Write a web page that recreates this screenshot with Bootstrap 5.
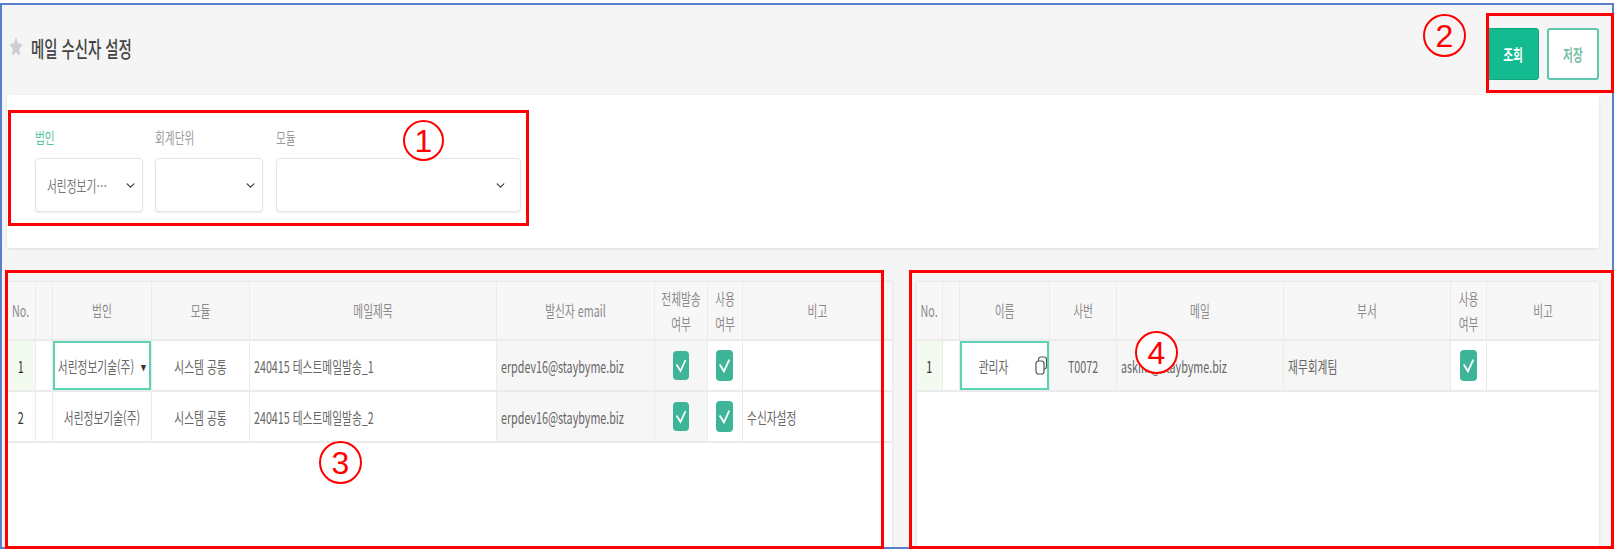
<!DOCTYPE html>
<html lang="ko">
<head>
  <meta charset="UTF-8" />
  <meta name="viewport" content="width=device-width, initial-scale=1.0"/>
  <title>메일 수신자 설정</title>
  <link href="https://cdn.jsdelivr.net/npm/bootstrap@5.3.0/dist/css/bootstrap.min.css" rel="stylesheet" />
  <style>
    html, body {
      height: 549px;
      overflow: hidden;
    }
    body {
      position: relative;
      padding-top: 3px;
      background-color: #fff;
      font-family: "Noto Sans CJK KR", "Noto Sans", sans-serif;
      font-size: 16px;
      color: #666;
    }
    .app-frame {
      height: 546px;
      padding-right: 13px;
      padding-left: 5px;
      border: 2px solid #5b7fcb;
      background-color: #f5f5f5;
    }
    /* the reference is squeezed sideways: text keeps its height, loses a third of its width */
    .squeeze {
      display: block;
      width: 149.25%;
      transform: scaleX(.67);
      transform-origin: 0 50%;
      white-space: nowrap;
    }
    .page-head {
      height: 90px;
    }
    .page-star {
      width: 14px;
      height: 21px;
      margin: 0 8px 7px 2px;
      flex: none;
    }
    .page-title {
      width: 120px;
      margin-bottom: 3px;
      font-size: 21.500px;
      font-weight: 500;
      color: #444;
    }
    .head-btns {
      margin-top: 8px;
    }
    .btn-query, .btn-save {
      width: 52px;
      height: 52px;
      padding: 0;
      border-radius: 3px;
      font-weight: 700;
    }
    .btn-query, .btn-query:hover {
      background-color: #14bb90;
      border: 1px solid #0ea77f;
      color: #fff;
    }
    .btn-save, .btn-save:hover {
      background-color: #fff;
      border: 2px solid #5cc7ac;
      color: #7bbfa9;
    }
    .filter-box {
      height: 153px;
      padding: 26px 28px 0;
      gap: 12px;
      background-color: #fff;
      border-radius: 3px;
      box-shadow: 0 1px 3px rgba(0,0,0,.1);
    }
    .filter-item {
      width: 108px;
    }
    .filter-wide {
      width: 245px;
      margin-left: 1px;
    }
    .filter-label {
      height: 37px;
      color: #9c9c9c;
      line-height: 33px;
    }
    .filter-on {
      color: #58c3a5;
    }
    .filter-select {
      height: 54px;
      padding: 0 0 0 11px;
      display: flex;
      align-items: center;
      border: 1px solid #e6e6e6;
      border-radius: 4px;
      box-shadow: 0 1px 2px rgba(0,0,0,.08);
      background-position: right 6px center;
      background-size: 11px 9px;
      color: #777;
      font-size: 16px;
    }
    .filter-wide .filter-select {
      background-position: right 14px center;
    }
    .grid-row {
      margin-top: 34px;
      height: 265px;
    }
    .grid-panel {
      background-color: #fff;
      box-shadow: 0 0 3px rgba(0,0,0,.12);
    }
    .panel-left {
      width: 885px;
    }
    .panel-right {
      width: 682px;
    }
    .mail-grid {
      table-layout: fixed;
      margin: 0;
      font-size: 16px;
    }
    .mail-grid>:not(caption)>*>* {
      padding: 0;
      border: 1px solid #ebebeb;
      border-width: 0 1px 2px 0;
      vertical-align: middle;
      color: #666;
    }
    .mail-grid>thead>tr>th {
      height: 58px;
      background-color: #f8f7f8;
      color: #8a8a8a;
      font-weight: 400;
      line-height: 25px;
      text-align: center;
    }
    .mail-grid>tbody>tr>td {
      height: 51px;
    }
    .mail-grid>tbody>tr>td.cell-ro {
      background-color: #f7f6f7;
    }
    .mail-grid>tbody>tr>td.cell-row-on {
      background-color: #f3fbf0;
    }
    .mail-grid>tbody>tr>td.cell-on {
      box-shadow: inset 0 0 0 2px #5ed2b5;
    }
    .mail-grid>tbody>tr>td.cell-no {
      color: #333;
    }
    .cell-left {
      padding-left: 6px;
    }
    .cell-arrow {
      font-size: 8px;
      color: #333;
      margin-left: 10px;
      vertical-align: 2px;
    }
    .name-text {
      margin-right: 8px;
    }
    .copy-icon {
      width: 12px;
      height: 19px;
      margin-right: 2px;
      flex: none;
    }
    .grid-check.form-check-input {
      display: block;
      float: none;
      width: 16px;
      height: 29px;
      margin: 0 auto;
      border: 0;
      border-radius: 4px;
      background-color: #3eb498;
    }
    .grid-check.form-check-input:checked[type=checkbox] {
      background-image: url("data:image/svg+xml,%3csvg xmlns='http://www.w3.org/2000/svg' viewBox='0 0 16 29'%3e%3cpath fill='none' stroke='%23fff' stroke-width='1.700' d='M3.500 13.500l4 6.500 5-11'/%3e%3c/svg%3e");
      background-size: 100% 100%;
    }
    .grid-check.check-big.form-check-input {
      width: 17px;
      height: 31px;
    }
    .w-no-a { width: 28px; }
    .w-no-b { width: 25px; }
    .w-state { width: 17px; }
    .w-99 { width: 99px; }
    .w-98 { width: 98px; }
    .w-247 { width: 247px; }
    .w-158 { width: 158px; }
    .w-53 { width: 53px; }
    .w-35 { width: 35px; }
    .w-150 { width: 150px; }
    .w-90 { width: 90px; }
    .w-67 { width: 67px; }
    .w-167 { width: 167px; }
    .w-36 { width: 36px; }
    .w-113 { width: 113px; }
    /* red callouts drawn on top of the screen */
    .note-box {
      position: absolute;
      border: 3px solid #f00;
      pointer-events: none;
    }
    .note-1 { left: 8px; top: 110px; width: 521px; height: 116px; }
    .note-2 { left: 1486px; top: 13px; width: 128px; height: 80px; }
    .note-3 { left: 5px; top: 270px; width: 879px; height: 279px; }
    .note-4 { left: 909px; top: 270px; width: 705px; height: 279px; }
    .note-num {
      position: absolute;
      width: 43px;
      height: 43px;
      display: flex;
      align-items: center;
      justify-content: center;
      border: 2px solid #f00;
      border-radius: 50%;
      background-color: #fff;
      color: #f00;
      font-family: "Liberation Sans", sans-serif;
      font-size: 32px;
      line-height: 1;
    }
    .num-1 { left: 403px; top: 120px; width: 41px; height: 41px; }
    .num-2 { left: 1423px; top: 14px; background-color: #f5f5f5; }
    .num-3 { left: 319px; top: 441px; }
    .num-4 { left: 1135px; top: 331px; }
  </style>
</head>
<body>
  <div class="app-frame d-flex flex-column">
    <div class="page-head d-flex align-items-center">
      <svg class="page-star" viewBox="0 0 24 24" preserveAspectRatio="none">
        <path fill="#cfcfcf" d="M12 1l3.400 7.400 8.100.9-6 5.500 1.700 8L12 18.800 4.800 22.800l1.700-8-6-5.500 8.100-.9z"/>
      </svg>
      <div class="page-title"><span class="squeeze">메일 수신자 설정</span></div>
      <div class="head-btns ms-auto d-flex gap-2">
        <button type="button" class="btn btn-query"><span class="squeeze text-center">조회</span></button>
        <button type="button" class="btn btn-save"><span class="squeeze text-center">저장</span></button>
      </div>
    </div>

    <div class="filter-box d-flex">
      <div class="filter-item">
        <div class="filter-label filter-on"><span class="squeeze">법인</span></div>
        <div class="form-select filter-select"><span class="squeeze">서린정보기…</span></div>
      </div>
      <div class="filter-item">
        <div class="filter-label"><span class="squeeze">회계단위</span></div>
        <div class="form-select filter-select"></div>
      </div>
      <div class="filter-wide">
        <div class="filter-label"><span class="squeeze">모듈</span></div>
        <div class="form-select filter-select"></div>
      </div>
    </div>

    <div class="grid-row d-flex justify-content-between">
      <div class="grid-panel panel-left">
        <table class="table mail-grid">
          <colgroup>
            <col class="w-no-a"><col class="w-state"><col class="w-99"><col class="w-98"><col class="w-247"><col class="w-158"><col class="w-53"><col class="w-35"><col class="w-150">
          </colgroup>
          <thead>
            <tr>
              <th><span class="squeeze">No.</span></th>
              <th></th>
              <th><span class="squeeze">법인</span></th>
              <th><span class="squeeze">모듈</span></th>
              <th><span class="squeeze">메일제목</span></th>
              <th><span class="squeeze">발신자 email</span></th>
              <th><span class="squeeze">전체발송<br>여부</span></th>
              <th><span class="squeeze">사용<br>여부</span></th>
              <th><span class="squeeze">비고</span></th>
            </tr>
          </thead>
          <tbody>
            <tr>
              <td class="cell-no cell-row-on"><span class="squeeze text-center">1</span></td>
              <td></td>
              <td class="cell-on"><span class="squeeze text-center">서린정보기술(주)<span class="cell-arrow">▼</span></span></td>
              <td><span class="squeeze text-center">시스템 공통</span></td>
              <td><span class="squeeze cell-left">240415 테스트메일발송_1</span></td>
              <td class="cell-ro"><span class="squeeze cell-left">erpdev16@staybyme.biz</span></td>
              <td class="cell-ro"><input class="form-check-input grid-check" type="checkbox" checked aria-label="전체발송 여부"></td>
              <td><input class="form-check-input grid-check check-big" type="checkbox" checked aria-label="사용 여부"></td>
              <td></td>
            </tr>
            <tr>
              <td class="cell-no"><span class="squeeze text-center">2</span></td>
              <td></td>
              <td><span class="squeeze text-center">서린정보기술(주)</span></td>
              <td><span class="squeeze text-center">시스템 공통</span></td>
              <td><span class="squeeze cell-left">240415 테스트메일발송_2</span></td>
              <td class="cell-ro"><span class="squeeze cell-left">erpdev16@staybyme.biz</span></td>
              <td class="cell-ro"><input class="form-check-input grid-check" type="checkbox" checked aria-label="전체발송 여부"></td>
              <td><input class="form-check-input grid-check check-big" type="checkbox" checked aria-label="사용 여부"></td>
              <td><span class="squeeze cell-left">수신자설정</span></td>
            </tr>
          </tbody>
        </table>
      </div>

      <div class="grid-panel panel-right">
        <table class="table mail-grid">
          <colgroup>
            <col class="w-no-b"><col class="w-state"><col class="w-90"><col class="w-67"><col class="w-167"><col class="w-167"><col class="w-36"><col class="w-113">
          </colgroup>
          <thead>
            <tr>
              <th><span class="squeeze">No.</span></th>
              <th></th>
              <th><span class="squeeze">이름</span></th>
              <th><span class="squeeze">사번</span></th>
              <th><span class="squeeze">메일</span></th>
              <th><span class="squeeze">부서</span></th>
              <th><span class="squeeze">사용<br>여부</span></th>
              <th><span class="squeeze">비고</span></th>
            </tr>
          </thead>
          <tbody>
            <tr>
              <td class="cell-no cell-row-on"><span class="squeeze text-center">1</span></td>
              <td></td>
              <td class="cell-on">
                <div class="d-flex align-items-center">
                  <div class="name-text flex-grow-1"><span class="squeeze text-center">관리자</span></div>
                  <svg class="copy-icon" viewBox="0 0 12 19" preserveAspectRatio="none" fill="none" stroke="#555" stroke-width="1.2">
                    <rect x="3.500" y="1" width="8" height="12" rx="2.500"/>
                    <rect x="1" y="5" width="8" height="13" rx="2.500" fill="#fff"/>
                  </svg>
                </div>
              </td>
              <td class="cell-ro"><span class="squeeze text-center">T0072</span></td>
              <td class="cell-ro"><span class="squeeze cell-left">askim@staybyme.biz</span></td>
              <td class="cell-ro"><span class="squeeze cell-left">재무회계팀</span></td>
              <td><input class="form-check-input grid-check check-big" type="checkbox" checked aria-label="사용 여부"></td>
              <td></td>
            </tr>
          </tbody>
        </table>
      </div>
    </div>
  </div>

  <div class="note-box note-1"></div>
  <div class="note-box note-2"></div>
  <div class="note-box note-3"></div>
  <div class="note-box note-4"></div>
  <div class="note-num num-1">1</div>
  <div class="note-num num-2">2</div>
  <div class="note-num num-3">3</div>
  <div class="note-num num-4">4</div>

  <script src="https://cdn.jsdelivr.net/npm/bootstrap@5.3.0/dist/js/bootstrap.bundle.min.js"></script>
</body>
</html>
